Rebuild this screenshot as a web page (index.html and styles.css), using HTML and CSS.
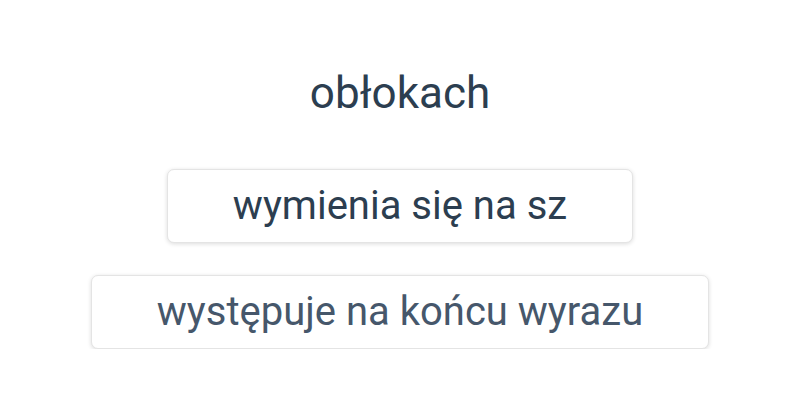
FILE: index.html
```html
<!DOCTYPE html>
<html lang="pl">
  <head>
    <meta charset="UTF-8" />
    <meta name="viewport" content="width=device-width, initial-scale=1.0" />
    <title>Quiz</title>
    <link rel="stylesheet" href="styles.css">
  </head>

  <body>
    <main class="quiz">
      <h1 class="word">obłokach</h1>
      <div class="answers">
        <button class="answer">wymienia się na sz</button>
        <button class="answer answer-dim">występuje na końcu wyrazu</button>
      </div>
    </main>
  </body>
</html>
```

FILE: styles.css
```css
body {
  margin: 0;
  background: #fff;
  font-family: Roboto, "Noto Sans", sans-serif;
  color: #2c3e50;
}
.quiz {
  display: flex;
  flex-direction: column;
  align-items: center;
  padding-top: 68px;
}
.word {
  margin: 0;
  font-size: 44px;
  font-weight: 400;
  line-height: 50px;
}
.answers {
  display: flex;
  flex-direction: column;
  align-items: center;
  gap: 32px;
  margin-top: 51px;
}
.answer {
  font-family: inherit;
  font-size: 40px;
  color: #2c3e50;
  background: #fff;
  border: 1px solid #e4e4e4;
  border-radius: 7px;
  box-shadow: 0 1px 4px rgba(0, 0, 0, 0.14);
  padding: 0 65px;
  height: 74px;
  line-height: 72px;
}
.answer-dim {
  color: #46576b;
}
```
